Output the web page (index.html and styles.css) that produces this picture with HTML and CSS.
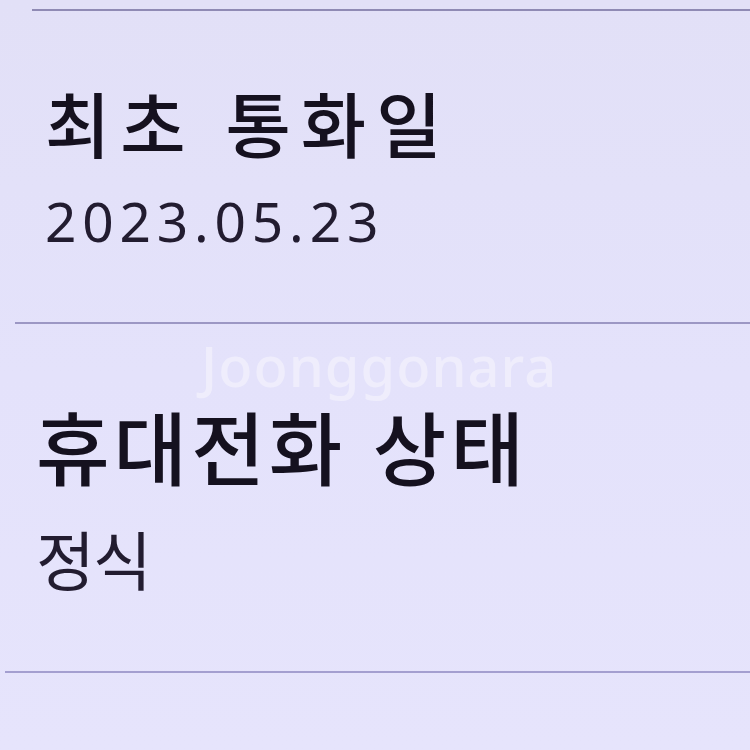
FILE: index.html
```html
<!DOCTYPE html>
<html lang="ko">
<head>
<meta charset="utf-8">
<link rel="stylesheet" href="styles.css">
</head>
<body>
<div class="screen">
  <div class="rule rule-top"></div>
  <section class="item item-first">
    <div class="title title-first">최초 통화일</div>
    <div class="value value-first">2023.05.23</div>
  </section>
  <div class="rule rule-mid"></div>
  <section class="item item-second">
    <div class="title title-second">휴대전화 상태</div>
    <div class="value value-second">정식</div>
  </section>
  <div class="rule rule-bottom"></div>
  <div class="watermark">Joonggonara</div>
</div>
</body>
</html>
```

FILE: styles.css
```css
html, body {
  margin: 0;
  padding: 0;
}
body {
  width: 750px;
  height: 750px;
  overflow: hidden;
  background: linear-gradient(180deg, #e2e0f7 0%, #e4e2fb 50%, #e6e4fc 100%);
  font-family: "Noto Sans CJK KR", "Noto Sans", sans-serif;
  color: #15111f;
}
.screen {
  position: relative;
  width: 750px;
  height: 750px;
}
.rule {
  height: 2px;
  background: #8f8ab4;
}
.rule-top {
  margin-top: 9px;
  margin-left: 32px;
}
.rule-mid {
  margin-left: 15px;
  background: #9c97c4;
}
.rule-bottom {
  margin-left: 5px;
  background: #a49fd0;
}
.item {
  display: flex;
  flex-direction: column;
  box-sizing: border-box;
}
.item-first {
  padding: 75px 0 0 45px;
  height: 311px;
}
.item-second {
  padding: 80px 0 0 36px;
  height: 347px;
}
.title {
  font-weight: 500;
  line-height: 1;
  white-space: nowrap;
}
.title-first {
  font-size: 71px;
  letter-spacing: 10px;
}
.title-second {
  font-size: 80px;
  letter-spacing: 4px;
}
.value {
  line-height: 1;
  font-weight: 400;
  color: #221c30;
  white-space: nowrap;
}
.value-first {
  font-family: "Noto Sans", "Noto Sans CJK KR", sans-serif;
  font-size: 55px;
  margin-top: 36px;
  letter-spacing: 5.8px;
}
.value-second {
  font-size: 64px;
  margin-top: 41px;
  letter-spacing: -2px;
}
.watermark {
  position: absolute;
  left: 201px;
  top: 328px;
  line-height: 1;
  font-family: "Noto Sans", sans-serif;
  font-size: 56px;
  font-weight: 500;
  color: rgba(255, 255, 255, 0.4);
  letter-spacing: 1px;
}
```
